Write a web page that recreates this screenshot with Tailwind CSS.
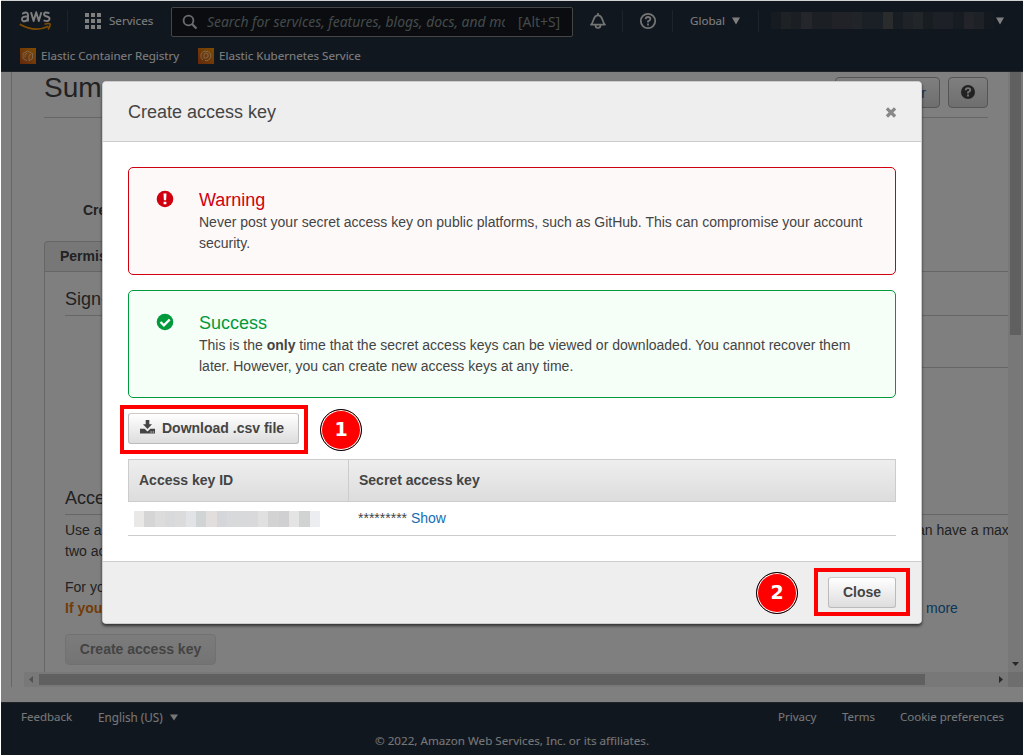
<!DOCTYPE html>
<html lang="en">
<head>
<meta charset="utf-8">
<title>Create access key</title>
<script src="https://cdn.jsdelivr.net/npm/@tailwindcss/browser@4"></script>
</head>
<body class="bg-white">
<div class="relative h-[756px] w-[1024px] overflow-hidden border-x border-white bg-white font-['Liberation_Sans',Arial,sans-serif] text-sm text-[#444]">
  <div class="flex h-[755px] flex-col border-t border-[#d2d2d2]">
    <!-- Navigation -->
    <header class="h-[71px] shrink-0 border-b border-[#414750] bg-[#232f3e] font-['Noto_Sans',sans-serif] text-[11.6px] text-white">
      <div class="flex h-10 items-center">
        <svg class="ml-[18px] shrink-0" width="34" height="24" viewBox="0 0 34 24">
          <g fill="none" stroke="#fff" stroke-width="1.9" stroke-linejoin="round">
            <path d="M3.2 4.8Q9 1.8 9 6V12.5M9 7.6Q3 6.8 3 10.2Q3.2 12.6 5.8 12.2Q8.6 11.8 9 9"/>
            <path d="M12 3.2L14.6 12L17.2 3.2L19.8 12L22.4 3.2"/>
            <path d="M30.4 4.2Q25.2 2.4 25 5.2Q25 6.8 28 7.5Q31 8.4 30.4 10.4Q29.4 13.2 24.6 11.4"/>
          </g>
          <path d="M.8 15.2Q16 23.800 29.500 17.200" fill="none" stroke="#ff9900" stroke-width="1.800"/>
          <path d="M25.500 15.200Q29.500 13.800 31.200 15Q31.400 17.500 29 20.500" fill="none" stroke="#ff9900" stroke-width="1.500"/>
        </svg>
        <div class="ml-[14px] h-[22px] w-px bg-[#3b4654]"></div>
        <div class="ml-[17px] grid grid-cols-3 gap-[2px]">
          <i class="size-1 bg-white"></i><i class="size-1 bg-white"></i><i class="size-1 bg-white"></i>
          <i class="size-1 bg-white"></i><i class="size-1 bg-white"></i><i class="size-1 bg-white"></i>
          <i class="size-1 bg-white"></i><i class="size-1 bg-white"></i><i class="size-1 bg-white"></i>
        </div>
        <span class="ml-[8px] w-[62px]">Services</span>
        <div class="mt-px flex h-[30px] w-[402px] shrink-0 items-center rounded-[2px] border border-[#888c8c] bg-[#16191f] text-[13.9px] text-[#879596]">
          <svg class="ml-[10px] shrink-0" width="16" height="16" viewBox="0 0 16 16" fill="none" stroke="#d5dbdb" stroke-width="1.8"><circle cx="6.500" cy="6.500" r="4.900"/><path d="M10 10l4.500 4.500" stroke-width="2.200"/></svg>
          <span class="ml-[9px] w-[298px] shrink-0 overflow-hidden whitespace-nowrap italic">Search for services, features, blogs, docs, and more</span>
          <span class="ml-[13px]">[Alt+S]</span>
        </div>
        <svg class="ml-[16px] shrink-0" width="18" height="18" viewBox="0 0 18 18" fill="none" stroke="#e8e8e8" stroke-width="1.700"><path d="M9 1v2M2 12.700C5.200 9.900 3.800 3.300 9 3.300S12.800 9.900 16 12.700Z" stroke-linejoin="round"/><path d="M6.500 13a2.500 3 0 0 0 5 0"/></svg>
        <div class="ml-[15px] h-[22px] w-px bg-[#3b4654]"></div>
        <svg class="ml-[16px] shrink-0" width="18" height="18" viewBox="0 0 18 18" fill="none" stroke="#e8e8e8" stroke-width="1.800"><circle cx="9" cy="9" r="7.200"/><path d="M6.600 7.200Q6.800 5 9 5T11.400 7Q11.400 8.200 9 9.400V10.600M9 11.600V13.400"/></svg>
        <div class="ml-[15px] h-[22px] w-px bg-[#3b4654]"></div>
        <span class="ml-[17px] w-[42px]">Global</span>
        <svg class="shrink-0" width="8" height="8" viewBox="0 0 8 8"><path d="M0 .5h8L4 7.500z" fill="#fff"/></svg>
        <div class="ml-[18px] h-[22px] w-px bg-[#3b4654]"></div>
        <div class="ml-[12px] flex h-[17px] w-[223px] shrink-0 -translate-y-px">
          <i class="w-[10px] bg-[#2b3642]"></i><i class="w-[10px] bg-[#3f444b]"></i><i class="w-[10px] bg-[#363d47]"></i><i class="w-[11px] bg-[#484c56]"></i><i class="w-[20px] bg-[#383e49]"></i><i class="w-[20px] bg-[#404550]"></i><i class="w-[10px] bg-[#434951]"></i><i class="w-[21px] bg-[#34404b]"></i><i class="w-[10px] bg-[#53565b]"></i><i class="w-[10px] bg-[#303946]"></i><i class="w-[10px] bg-[#3e454e]"></i><i class="w-[10px] bg-[#474c52]"></i><i class="w-[10px] bg-[#303a44]"></i><i class="w-[20px] bg-[#3b414e]"></i><i class="w-[11px] bg-[#2f3844]"></i><i class="w-[10px] bg-[#454952]"></i><i class="w-[10px] bg-[#3d434b]"></i><i class="w-[10px] bg-[#29323e]"></i>
        </div>
        <svg class="ml-[2px] shrink-0" width="8" height="8" viewBox="0 0 8 8"><path d="M0 .5h8L4 7.500z" fill="#fff"/></svg>
      </div>
      <div class="flex h-[30px] items-center">
        <svg class="ml-[19px] shrink-0" width="16" height="16" viewBox="0 0 16 16"><defs><linearGradient id="orange" x1="0" y1="1" x2="1" y2="0"><stop stop-color="#c8511b"/><stop offset="1" stop-color="#ff9900"/></linearGradient></defs><path fill="url(#orange)" d="M0 0h16v16H0z"/><g fill="none" stroke="#fff" stroke-opacity=".8" stroke-width=".8"><path d="M7 12.700L3 10.500V5.500L7.500 3L12.500 5.500V10.500L9 12.700V7.500L11 6.200M5 9.500V6.500L7.500 5"/></g></svg>
        <span class="ml-[5px] w-[157px] whitespace-nowrap">Elastic Container Registry</span>
        <svg class="shrink-0" width="16" height="16" viewBox="0 0 16 16"><path fill="url(#orange)" d="M0 0h16v16H0z"/><g fill="none" stroke="#fff" stroke-opacity=".8" stroke-width=".8"><path d="M5 12L3 9.500V6L5.500 3.300H10L12.700 6V9.500L10 12.500H7M6 10V6L8 5L10 6V9L8 10Z"/></g></svg>
        <span class="ml-[5px] whitespace-nowrap">Elastic Kubernetes Service</span>
      </div>
    </header>

    <!-- Page behind the dialog -->
    <main class="grid h-[615px] shrink-0 grid-cols-[1007px_15px] grid-rows-[600px_15px]">
      <div class="ml-[10px] overflow-hidden border-l border-[#ccc] pl-8">
        <div class="flex h-[46px] w-[944px] justify-between border-b border-[#ccc]">
          <h1 class="text-[28px] leading-[32px]">Summary</h1>
          <div class="mt-[5px] flex gap-2">
            <div class="flex h-[31px] w-[105px] items-center justify-end rounded-[4px] border border-[#aaa] bg-linear-to-b from-white to-[#ddd] pr-[13px] text-[#146eb4]">Delete user</div>
            <div class="flex h-[31px] w-10 items-center justify-center rounded-[4px] border border-[#aaa] bg-linear-to-b from-white to-[#ddd]">
              <svg class="-translate-y-px" width="14" height="14" viewBox="0 0 14 14"><circle cx="7" cy="7" r="7" fill="#444"/><path d="M4.700 5.300Q4.800 3.200 7 3.200T9.300 5Q9.300 6.200 7 7.300V8.600M7 9.500V11.400" fill="none" stroke="#eee" stroke-width="1.800"/></svg>
            </div>
          </div>
        </div>
        <div class="mt-[81px] ml-[39px] h-[42px] font-bold leading-[22px]">Creation time</div>
        <div class="flex h-[31px] border-b border-[#ccc]">
          <div class="rounded-t-[4px] border border-b-0 border-[#ccc] bg-[#eee] px-[15px] font-bold leading-[28px]">Permissions</div>
        </div>
        <div class="h-[420px] border-l border-[#ccc] pl-5">
          <div class="h-11 border-b border-[#ccc] pt-[17px] text-lg leading-[20px]">Sign-in credentials</div>
          <div class="ml-[200px] h-[52px] border-b border-[#ccc]"></div>
          <div class="mt-[119px] h-7 border-b border-[#ccc] text-lg leading-[22px]">Access keys</div>
          <div class="mt-[5px] flex whitespace-nowrap leading-[21px]">
            <span class="w-[845px] shrink-0">Use access keys to make<br>two access keys</span><span>can have a maximum of</span>
          </div>
          <div class="mt-[15px] leading-[21px]">For your protection</div>
          <div class="flex leading-[21px]"><b class="w-[861px] text-[#e47911]">If you lose or forget</b><span class="text-[#146eb4]">more</span></div>
          <div class="mt-[15px] h-[31px] w-[151px] rounded-[4px] border border-[#e2e2e2] bg-linear-to-b from-[#f8f8f8] to-[#e8e8e8] text-center font-bold leading-[29px] text-[#888]">Create access key</div>
        </div>
      </div>
      <div class="flex flex-col bg-[#f1f1f1]">
        <div class="mx-[2px] h-[263px] bg-[#c1c1c1]"></div>
        <svg class="mx-auto mt-auto mb-[6px]" width="7" height="4" viewBox="0 0 7 4"><path d="M0 0h7L3.500 4z" fill="#505050"/></svg>
      </div>
      <div class="flex">
        <div class="ml-[10px] w-[13px] shrink-0 border-l border-[#ccc]"></div>
        <div class="flex flex-1 items-center bg-[#f1f1f1]">
          <svg class="ml-[5px]" width="4" height="7" viewBox="0 0 4 7"><path d="M4 0v7L0 3.500z" fill="#a3a3a3"/></svg>
          <div class="ml-[6px] h-[11px] w-[886px] bg-[#c1c1c1]"></div>
          <svg class="ml-auto mr-[5px]" width="4" height="7" viewBox="0 0 4 7"><path d="M0 0v7L4 3.500z" fill="#505050"/></svg>
        </div>
      </div>
      <div class="bg-[#dcdcdc]"></div>
    </main>

    <footer class="mt-[15px] h-[53px] shrink-0 border-t border-[#414750] bg-[#232f3e] font-['Noto_Sans',sans-serif] text-[11.5px] text-[#eee]">
      <div class="flex h-[28px] items-center pl-5 pr-5">
        <span class="w-[77px]">Feedback</span>
        <span class="w-[72px] text-[11.7px]">English (US)</span>
        <svg width="8" height="7" viewBox="0 0 8 7"><path d="M0 .5h8L4 6.500z" fill="#eee"/></svg>
        <span class="ml-auto w-[64px]">Privacy</span>
        <span class="w-[58px]">Terms</span>
        <span class="w-[103px] whitespace-nowrap">Cookie preferences</span>
      </div>
      <div class="text-center text-[11.65px] leading-[20px]">© 2022, Amazon Web Services, Inc. or its affiliates.</div>
    </footer>
  </div>

  <div class="absolute inset-x-0 top-px bottom-px bg-black/50"></div>

  <!-- Dialog -->
  <section class="absolute left-[101px] top-[81px] flex h-[543px] w-[820px] flex-col overflow-hidden rounded-[4px] border border-[#ccc] bg-white shadow-[0_2px_3px_rgba(0,0,0,0.6)]">
    <div class="flex h-[60px] shrink-0 items-center justify-between border-b border-[#ccc] bg-[#eee] pl-[25px] pr-[24px]">
      <h2 class="text-lg">Create access key</h2>
      <svg width="12" height="12" viewBox="0 0 12 12"><path d="M1.900 2.300l8.200 8.200M10.100 2.300l-8.200 8.200" stroke="#888" stroke-width="3.200"/></svg>
    </div>
    <div class="flex-1 px-[25px] pt-[25px]">
      <div class="flex h-[108px] rounded-[5px] border border-[#d0000f] bg-[#fdf9f9]">
        <svg class="ml-[27px] mt-[22px] shrink-0" width="18" height="18" viewBox="0 0 18 18"><circle cx="9" cy="9" r="8.300" fill="#d0000f"/><path d="M7.500 3.500h3l-.4 6.800H7.900zM7.600 11.700h2.800v2.600H7.600z" fill="#fff"/></svg>
        <div class="ml-[25px]"><h3 class="mt-[21px] text-lg leading-[22px] text-[#d0000f]">Warning</h3><p class="mt-px w-[670px] leading-[21px]">Never post your secret access key on public platforms, such as GitHub. This can compromise your account security.</p></div>
      </div>
      <div class="mt-[15px] flex h-[108px] rounded-[5px] border border-[#009a3c] bg-[#f6fef8]">
        <svg class="ml-[27px] mt-[22px] shrink-0" width="18" height="18" viewBox="0 0 18 18"><circle cx="9" cy="9" r="8.300" fill="#009a3c"/><path d="M4.500 9l3.400 3.400L13.700 6.500" fill="none" stroke="#fff" stroke-width="2.400"/></svg>
        <div class="ml-[25px]"><h3 class="mt-[21px] text-lg leading-[22px] text-[#009a3c]">Success</h3><p class="mt-px w-[670px] leading-[21px]">This is the <b>only</b> time that the secret access keys can be viewed or downloaded. You cannot recover them later. However, you can create new access keys at any time.</p></div>
      </div>
      <div class="mt-[15px] flex h-[31px] w-[171px] items-center rounded-[3px] border border-[#bbb] border-t-[#ccc] bg-linear-to-b from-white to-[#ddd] pb-[2px] pl-[11px] font-bold">
        <svg class="-mt-px mr-[7px]" width="15" height="14" viewBox="0 0 15 14" fill="#444"><path d="M5.700 0h3.600v4.200H12L7.500 9 3 4.200h2.700z"/><path d="M0 8.800h4.600L7.500 11.500l2.900-2.700H15V13.500H0z"/><path d="M10.500 11.400h1.200v1h-1.200zM12.700 11.400h1.200v1h-1.200z" fill="#eee"/></svg>
        <span>Download .csv file</span>
      </div>
      <div class="mt-[15px] grid h-[43px] grid-cols-[220px_1fr] border border-[#ccc] bg-linear-to-b from-[#eee] to-[#ddd] font-bold leading-[41px]">
        <div class="border-r border-[#ccc] pl-[10px]">Access key ID</div><div class="pl-[10px]">Secret access key</div>
      </div>
      <div class="flex h-[34px] items-center border-b border-[#ccc]">
        <div class="ml-[6px] flex h-4 w-[186px]">
          <i class="w-[10px] bg-[#e9e8e7]"></i><i class="w-[11px] bg-[#d5d5d5]"></i><i class="w-[10px] bg-[#dcdcdc]"></i><i class="w-[10px] bg-[#d8d9db]"></i><i class="w-[11px] bg-[#dbdbdb]"></i><i class="w-[10px] bg-[#e1e3e6]"></i><i class="w-[10px] bg-[#d1d4d4]"></i><i class="w-[11px] bg-[#e3dede]"></i><i class="w-[10px] bg-[#d5d6d9]"></i><i class="w-[20px] bg-[#d8d9da]"></i><i class="w-[11px] bg-[#d9d9db]"></i><i class="w-[10px] bg-[#e0e0e0]"></i><i class="w-[11px] bg-[#d4d3d3]"></i><i class="w-[10px] bg-[#d0d0d3]"></i><i class="w-[10px] bg-[#e4e4e4]"></i><i class="w-[11px] bg-[#d0d3d2]"></i><i class="w-[10px] bg-[#ecedf1]"></i>
        </div>
        <span class="ml-[38px] pb-[2px]">********* <span class="text-[#146eb4]">Show</span></span>
      </div>
    </div>
    <div class="flex h-[62px] shrink-0 justify-end border-t border-[#ccc] bg-[#eee] pt-[15px] pr-[25px]">
      <div class="h-[31px] w-[68px] rounded-[3px] border border-[#bbb] border-t-[#ccc] bg-linear-to-b from-white to-[#ddd] text-center font-bold leading-[28px]">Close</div>
    </div>
  </section>

  <!-- Step markers -->
  <div class="absolute left-[119px] top-[405px] h-[49px] w-[188px] border-4 border-[#f00]"></div>
  <div class="absolute left-[813px] top-[568px] h-[48px] w-[96px] border-4 border-[#f00]"></div>
  <div class="absolute left-[319px] top-[409px] flex size-[42px] items-center justify-center rounded-full border border-black bg-[#f00] font-['DejaVu_Sans',sans-serif] text-[19px] font-bold text-white shadow-[inset_0_0_0_1px_#fff]">1</div>
  <div class="absolute left-[755px] top-[572px] flex size-[42px] items-center justify-center rounded-full border border-black bg-[#f00] font-['DejaVu_Sans',sans-serif] text-[19px] font-bold text-white shadow-[inset_0_0_0_1px_#fff]">2</div>

  <!-- Slivers of the window underneath, left and right -->
  <svg class="absolute -left-px top-0" width="1" height="756"><path d="M.5 4v1M.5 6v2M.5 11v2M.5 46v1M.5 48v2M.5 100v1M.5 158v1M.5 161v1M.5 164v1M.5 221v3M.5 227v3M.5 662v2M.5 669v2" stroke="#222"/><path d="M.5 51v2M.5 182v2M.5 188v2M.5 665v2" stroke="#2f8ccb"/></svg>
  <svg class="absolute -right-px top-0" width="1" height="756"><path d="M.5 46v2M.5 51v2M.5 72v1M.5 74v1M.5 77v1M.5 135v2M.5 139v1M.5 622v1" stroke="#222"/><path d="M.5 158v7M.5 390v8M.5 511v7" stroke="#3b7bc8"/><path d="M.5 566v1M.5 570v3" stroke="#b06a3a"/></svg>
</div>
</body>
</html>
